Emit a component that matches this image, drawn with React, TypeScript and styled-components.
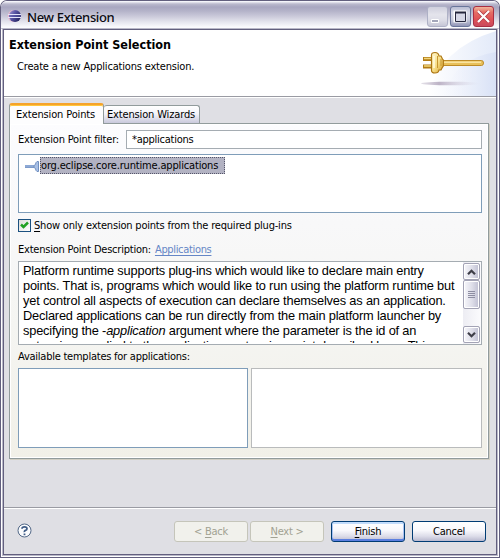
import React from 'react';
import styled, { createGlobalStyle, css } from 'styled-components';

const GlobalStyle = createGlobalStyle`
  * { box-sizing: border-box; }
  body { margin: 0; background: #fff; overflow: hidden; }
`;

const Window = styled.div`
  width: 500px;
  height: 558px;
  padding: 1px;
  background: #625f7e;
  border-radius: 7px 7px 0 0;
  font: 11px/14px 'DejaVu Sans Condensed', 'DejaVu Sans', sans-serif;
  color: #000;
`;

const Frame = styled.div`
  height: 556px;
  display: flex;
  flex-direction: column;
  border-radius: 6px 6px 0 0;
  overflow: hidden;
  background: #fff;
`;

const TitleBar = styled.header`
  height: 28px;
  flex: none;
  display: flex;
  align-items: center;
  padding: 2px 5px 0 6px;
  border-top: 1px solid #f4f4fa;
  border-bottom: 1px solid #c6c6d4;
  background: linear-gradient(#e9e9f1 0, #bab9cd 2px, #a8a6c0 5px, #b4b3c9 9px, #c9c8d9 14px, #e5e5ee 20px, #fafafd 25px, #fff 27px);
`;

const Title = styled.h1`
  flex: 1;
  margin: 0 0 0 5px;
  padding-top: 1px;
  font: 500 13px/18px 'Noto Sans', sans-serif;
  letter-spacing: -0.35px;
  color: #0b0b12;
`;

const WindowButtons = styled.div`
  display: flex;
  gap: 2px;
  padding-top: 1px;
`;

type Tone = 'muted' | 'plain' | 'danger';

const WindowButton = styled.button<{ $tone: Tone }>`
  width: 21px;
  height: 21px;
  padding: 0;
  display: grid;
  place-items: center;
  border-radius: 3px;
  ${({ $tone }) =>
    $tone === 'danger'
      ? css`
          border: 1px solid #a92e42;
          background: linear-gradient(#f0b69b, #e66d65 28%, #df5157 65%, #c9495d);
        `
      : $tone === 'plain'
        ? css`
            border: 1px solid #69759a;
            background: linear-gradient(#b9bdd3, #d9dbe8 30%, #c9ccdd 65%, #9296b7);
          `
        : css`
            border: 1px solid #aeb1c6;
            background: linear-gradient(#cfcfdd, #e4e4ec 40%, #dcdce6 70%, #c6c6d6);
          `}
`;

const Client = styled.main`
  flex: 1;
  min-height: 0;
  margin: 0 2px 2px;
  display: flex;
  flex-direction: column;
  border: 1px solid #625f7e;
  outline: 1px solid #b9b8c8;
  background: #dfdfe4;
`;

const Banner = styled.section`
  height: 68px;
  flex: none;
  display: flex;
  justify-content: space-between;
  border-bottom: 1px solid #fff;
  box-shadow: inset 0 -1px 0 #9a9ba3;
  padding-bottom: 1px;
  background: #fff;
`;

const BannerText = styled.div`
  padding: 7px 0 0 5px;
`;

const Heading = styled.h2`
  margin: 0;
  font-size: 12.5px;
  line-height: 16px;
  font-weight: 700;
`;

const Subheading = styled.p`
  margin: 7px 0 0 8px;
  letter-spacing: -0.18px;
`;

const Body = styled.section`
  height: 410px;
  flex: none;
  padding: 5px 7px 0 5px;
  border-bottom: 1px solid #9a9ba3;
`;

const Tabs = styled.div`
  display: flex;
  align-items: flex-end;
  height: 20px;
`;

const Tab = styled.button<{ $active?: boolean }>`
  flex: none;
  padding: 0;
  font: inherit;
  letter-spacing: -0.15px;
  text-align: left;
  border: 1px solid #919b9c;
  border-radius: 3px 3px 0 0;
  ${({ $active }) =>
    $active
      ? css`
          width: 95px;
          height: 21px;
          margin-bottom: -1px;
          padding-left: 6px;
          border-bottom: 0;
          border-top: 2px solid #f5a32b;
          box-shadow: inset 0 1px 0 #ffc73c;
          background: #fdfdfe;
          z-index: 1;
        `
      : css`
          width: 96px;
          height: 18px;
          padding-left: 3px;
          padding-top: 1px;
          border-left: 0;
          border-bottom: 0;
          background: linear-gradient(#fff, #f4f4f9 45%, #c9c9dc);
        `}
`;

const Panel = styled.div`
  width: 480px;
  height: 336px;
  padding: 6px 6px 0 8px;
  border: 1px solid #919b9c;
  box-shadow: inset 0 0 0 1px #fff, 1px 1px 0 #d0cec3;
  background: linear-gradient(#fcfcfe, #f8f8f9 30%, #f5f5f2 60%, #f1f0e8);
`;

const FilterRow = styled.label`
  display: flex;
  align-items: center;
  justify-content: space-between;
  height: 19px;
  letter-spacing: -0.2px;
`;

const FilterInput = styled.input`
  width: 356px;
  height: 19px;
  padding: 0 5px 1px;
  border: 1px solid #a5acb2;
  outline: 0;
  background: #fff;
  font: inherit;
  letter-spacing: -0.25px;
  color: #000;
`;

const PointList = styled.div`
  height: 59px;
  margin-top: 5px;
  padding: 2px 5px;
  border: 1px solid #7f9db9;
  background: #fff;
`;

const PointRow = styled.div`
  display: flex;
  align-items: center;
`;

const PointName = styled.span`
  width: 185px;
  height: 17px;
  line-height: 15px;
  border: 1px dotted #55556a;
  background: #b2b2c2;
  letter-spacing: -0.17px;
  white-space: nowrap;
`;

const CheckRow = styled.label`
  display: flex;
  align-items: center;
  gap: 3px;
  height: 15px;
  margin-top: 5px;
  letter-spacing: -0.2px;
`;

const CheckBox = styled.span`
  width: 13px;
  height: 13px;
  display: grid;
  place-items: center;
  border: 1px solid #1c5180;
  background: linear-gradient(135deg, #dcdcd7, #fff);
`;

const Mnemonic = styled.span`
  text-decoration: underline;
  text-underline-offset: 2px;
`;

const DescriptionLabel = styled.div`
  height: 14px;
  margin-top: 10px;
  display: flex;
  gap: 4px;
  letter-spacing: -0.22px;
`;

const Link = styled.a`
  color: #6586c6;
  text-decoration: underline;
  text-underline-offset: 2px;
  letter-spacing: -0.33px;
`;

const DescriptionBox = styled.div`
  height: 84px;
  margin-top: 4px;
  display: flex;
  border: 1px solid #a5acb2;
  background: #fff;
`;

const Description = styled.div`
  flex: 1;
  height: 81px;
  padding: 1px 0 0 4px;
  overflow: hidden;
  font: 12.8px/15px 'Liberation Sans', Arial, sans-serif;
  letter-spacing: -0.18px;
  white-space: nowrap;
`;

const ScrollBar = styled.div`
  width: 18px;
  display: flex;
  flex-direction: column;
  padding: 1px 1px 1px 0;
  background: linear-gradient(90deg, #ededf3, #fbfbfd);
`;

const ScrollPart = styled.div<{ $size: number }>`
  height: ${({ $size }) => $size}px;
  display: grid;
  place-items: center;
  border: 1px solid #a3a3b5;
  border-radius: 2px;
  box-shadow: inset 0 0 0 1px #fff;
  background: linear-gradient(90deg, #f7f7fb, #dddde8 55%, #bfbfd2);
`;

const ScrollSpace = styled.div`
  flex: 1;
`;

const TemplatesLabel = styled.div`
  height: 14px;
  margin-top: 5px;
  letter-spacing: -0.24px;
`;

const TemplatePanes = styled.div`
  display: grid;
  grid-template-columns: 230px 231px;
  gap: 3px;
  height: 80px;
  margin-top: 4px;
`;

const TemplatePane = styled.div<{ $disabled?: boolean }>`
  border: 1px solid ${({ $disabled }) => ($disabled ? '#b9bbbc' : '#7f9db9')};
  background: #fff;
`;

const Footer = styled.footer`
  flex: 1;
  display: flex;
  align-items: flex-start;
  padding: 12px 10px 0 13px;
  border-top: 1px solid #fff;
`;

const HelpIcon = styled.svg`
  margin: 2px auto 0 0;
`;

const Actions = styled.div`
  display: flex;
  gap: 7px;
`;

const PagingActions = styled.div`
  display: flex;
  gap: 2px;
`;

const Action = styled.button<{ $kind: 'disabled' | 'default' | 'normal' }>`
  width: 74px;
  height: 21px;
  padding: 0;
  font: inherit;
  letter-spacing: -0.25px;
  border-radius: 3px;
  ${({ $kind }) =>
    $kind === 'disabled'
      ? css`
          border: 1px solid #c5c5ba;
          background: #f1f1ec;
          color: #a1a192;
        `
      : css`
          border: 1px solid #003c74;
          background: linear-gradient(#fff, #f8f8fc 45%, #dcdce9 75%, #b9b9cf);
          color: #000;
        `}
  ${({ $kind }) =>
    $kind === 'default' &&
    css`
      box-shadow: inset 0 2px 0 #c2dcfc, inset 0 -2px 0 #5b7fe0, inset 1px 0 0 #a9c2f2, inset -1px 0 0 #a9c2f2;
    `}
`;

const EclipseLogo = () => (
  <svg width="15" height="15" viewBox="0 0 15 15">
    <defs>
      <linearGradient id="orb" x1="0" x2="1" y1="0" y2="0.6">
        <stop offset="0" stopColor="#a39cd2" />
        <stop offset="0.45" stopColor="#5a56a5" />
        <stop offset="1" stopColor="#262562" />
      </linearGradient>
    </defs>
    <circle cx="6.7" cy="7" r="6" fill="#e8b6cc" />
    <circle cx="8" cy="7" r="6" fill="url(#orb)" />
    <path d="M1 5.500h13M1 8.500h13" stroke="#e4e4fa" />
    <path d="M2 7h12" stroke="#5a5aac" strokeWidth=".8" />
  </svg>
);

const BannerArt = () => (
  <svg width="78" height="66" viewBox="0 0 78 66">
    <defs>
      <linearGradient id="sweep" x1="0" x2="1">
        <stop offset="0" stopColor="#fff" />
        <stop offset="1" stopColor="#e3eaf9" />
      </linearGradient>
      <linearGradient id="sweepInner" x1="0" x2="1">
        <stop offset="0" stopColor="#f4f6fd" stopOpacity="0" />
        <stop offset="1" stopColor="#d8e1f6" />
      </linearGradient>
      <linearGradient id="shade" x1="0" x2="1">
        <stop offset="0" stopColor="#c9c2d1" stopOpacity=".5" />
        <stop offset=".3" stopColor="#bdb3c6" />
        <stop offset="1" stopColor="#dcdcea" stopOpacity="0" />
      </linearGradient>
      <linearGradient id="brass" x1="0" x2="1" y1="0" y2="1">
        <stop offset="0" stopColor="#fff8cf" />
        <stop offset=".5" stopColor="#f8df89" />
        <stop offset="1" stopColor="#d19d28" />
      </linearGradient>
    </defs>
    <path d="M10 66Q22 18 78 1V66Z" fill="url(#sweep)" />
    <path d="M25 66Q37 28 78 22V66Z" fill="url(#sweepInner)" />
    <ellipse cx="33" cy="53.500" rx="30" ry="1.800" fill="url(#shade)" />
    <path d="M5 29h9M5 36.500h9" stroke="#b27c17" strokeWidth="4" />
    <path d="M6 28.500h8M6 36h8" stroke="#f3d77b" strokeWidth="1.500" />
    <path d="M24 30.500h39.500q2 0 2 2.500t-2 2.500h-39.500Z" fill="#e8c05a" stroke="#bd8b27" />
    <path d="M24 32.300h39" stroke="#f9e3a0" strokeWidth="1.400" />
    <path d="M13.500 25q0-2.500 3.500-2.500t4 3.500h2l1.500 3 .8 1v6l-1 1.500-1.300 2.500h-2q-.5 3-4 3t-3.500-2.500Z" fill="url(#brass)" stroke="#ad7613" strokeWidth="1.200" />
    <path d="M19.500 26v12M23 29v7" stroke="#c79630" />
    <path d="M16 26v12" stroke="#fffbe2" strokeWidth="1.500" />
  </svg>
);

const PointIcon = () => (
  <svg width="16" height="14" viewBox="0 0 16 14">
    <path d="M1 7.500h9" stroke="#7d9bcb" strokeWidth="3" />
    <path d="M1 7h9" stroke="#9fb7de" />
    <path d="M14.500 2.500h-1.500q-1.500 1-1.500 3l-1.500 1v2l1.500 1q0 2 1.500 3h1.500Z" fill="#a9c0e5" stroke="#6f8fc0" />
  </svg>
);

const Chevron = ({ down = false }: { down?: boolean }) => (
  <svg width="9" height="6" viewBox="0 0 9 6">
    <path d={down ? 'M1 .8l3.500 3.500 3.500-3.500' : 'M1 5.200l3.500-3.500 3.500 3.500'} fill="none" stroke="#3e3e48" strokeWidth="2.200" />
  </svg>
);

export default function App() {
  return (
    <>
      <GlobalStyle />
      <Window>
        <Frame>
          <TitleBar>
            <EclipseLogo />
            <Title>New Extension</Title>
            <WindowButtons>
              <WindowButton $tone="muted" aria-label="Minimize">
                <svg width="19" height="19"><path d="M3.500 12.500h7v3h-7z" fill="#a3a6ba" stroke="#fff" /></svg>
              </WindowButton>
              <WindowButton $tone="plain" aria-label="Maximize">
                <svg width="19" height="19">
                  <path d="M3.500 4.500h11v10h-11z" fill="none" stroke="#fff" strokeWidth="2" />
                  <path d="M4.500 5.500h10v9h-10z" fill="#d5d7e5" stroke="#24263c" />
                  <path d="M4 5.500h11" stroke="#24263c" strokeWidth="2" />
                </svg>
              </WindowButton>
              <WindowButton $tone="danger" aria-label="Close">
                <svg width="19" height="19">
                  <path d="M4.500 4.500l10 10M14.500 4.500l-10 10" stroke="#a93544" strokeWidth="3.500" />
                  <path d="M4 4l11 11M15 4L4 15" stroke="#fff" strokeWidth="2.200" />
                </svg>
              </WindowButton>
            </WindowButtons>
          </TitleBar>

          <Client>
            <Banner>
              <BannerText>
                <Heading>Extension Point Selection</Heading>
                <Subheading>Create a new Applications extension.</Subheading>
              </BannerText>
              <BannerArt />
            </Banner>

            <Body>
              <Tabs>
                <Tab $active>Extension Points</Tab>
                <Tab>Extension Wizards</Tab>
              </Tabs>
              <Panel>
                <FilterRow>
                  Extension Point filter:
                  <FilterInput defaultValue="*applications" />
                </FilterRow>
                <PointList>
                  <PointRow>
                    <PointIcon />
                    <PointName>org.eclipse.core.runtime.applications</PointName>
                  </PointRow>
                </PointList>
                <CheckRow>
                  <CheckBox>
                    <svg width="9" height="9"><path d="M1 3.500l2.500 2.500L8 1.500" fill="none" stroke="#21a121" strokeWidth="2.500" /></svg>
                  </CheckBox>
                  <span><Mnemonic>S</Mnemonic>how only extension points from the required plug-ins</span>
                </CheckRow>
                <DescriptionLabel>
                  <span>Extension Point Description:</span>
                  <Link>Applications</Link>
                </DescriptionLabel>
                <DescriptionBox>
                  <Description>
                    Platform runtime supports plug-ins which would like to declare main entry<br />
                    points. That is, programs which would like to run using the platform runtime but<br />
                    yet control all aspects of execution can declare themselves as an application.<br />
                    Declared applications can be run directly from the main platform launcher by<br />
                    specifying the -<i>application</i> argument where the parameter is the id of an<br />
                    extension supplied to the applications extension point described here. This
                  </Description>
                  <ScrollBar>
                    <ScrollPart $size={17}><Chevron /></ScrollPart>
                    <ScrollPart $size={29}>
                      <svg width="7" height="8"><path d="M0 .5h7M0 2.500h7M0 4.500h7M0 6.500h7" stroke="#8e8ea2" /></svg>
                    </ScrollPart>
                    <ScrollSpace />
                    <ScrollPart $size={17}><Chevron down /></ScrollPart>
                  </ScrollBar>
                </DescriptionBox>
                <TemplatesLabel>Available templates for applications:</TemplatesLabel>
                <TemplatePanes>
                  <TemplatePane />
                  <TemplatePane $disabled />
                </TemplatePanes>
              </Panel>
            </Body>

            <Footer>
              <HelpIcon width="15" height="15" viewBox="0 0 15 15">
                <circle cx="7.500" cy="7.500" r="6.500" fill="#fafbfd" stroke="#526887" />
                <path d="M5 5.800Q5 3.800 7.500 3.800T10 5.700Q10 6.800 8.500 7.400T7.500 9.200" fill="none" stroke="#3f5c86" strokeWidth="1.700" />
                <path d="M6.600 10.500h1.800v1.700H6.600z" fill="#3f5c86" />
              </HelpIcon>
              <Actions>
                <PagingActions>
                  <Action $kind="disabled">&lt; <Mnemonic>B</Mnemonic>ack</Action>
                  <Action $kind="disabled"><Mnemonic>N</Mnemonic>ext &gt;</Action>
                </PagingActions>
                <Action $kind="default"><Mnemonic>F</Mnemonic>inish</Action>
                <Action $kind="normal">Cancel</Action>
              </Actions>
            </Footer>
          </Client>
        </Frame>
      </Window>
    </>
  );
}
